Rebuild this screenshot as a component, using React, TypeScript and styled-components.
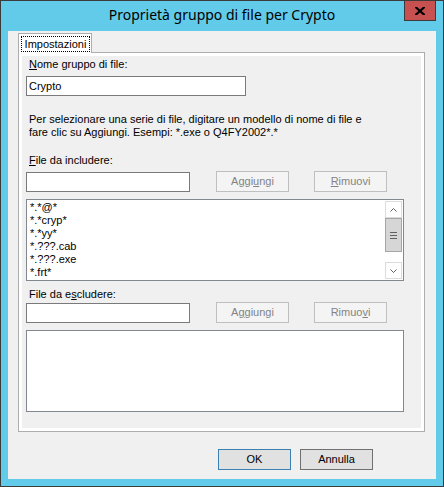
import React from "react";
import styled, { createGlobalStyle } from "styled-components";

const GlobalStyle = createGlobalStyle`
  html, body { margin: 0; padding: 0; background: #ffffff; }
  body { font-family: "Liberation Sans", Arial, sans-serif; }
  * { box-sizing: border-box; }
`;

const Window = styled.div`
  position: relative;
  width: 444px;
  height: 487px;
  border: 1px solid #3b3b3b;
  background: #63cbea;
  padding: 0 7px 7px 7px;
  display: flex;
  flex-direction: column;
`;

const TitleBar = styled.div`
  height: 30px;
  display: flex;
  justify-content: center;
`;

const Title = styled.div`
  font-family: "Noto Sans", "Open Sans", sans-serif;
  font-size: 14px;
  line-height: 20px;
  padding-top: 4px;
  color: #000000;
`;

const CloseButton = styled.div`
  position: absolute;
  top: -1px;
  right: 7px;
  width: 32px;
  height: 21px;
  background: #c75050;
  border: 1px solid #3b3b3b;
  display: flex;
  align-items: center;
  justify-content: center;
`;

const Client = styled.div`
  flex: 1;
  background: #f0f0f0;
  padding: 2px 11px 0 10px;
  display: flex;
  flex-direction: column;
`;

const TabStrip = styled.div`
  display: flex;
  height: 19px;
`;

const Tab = styled.div`
  position: relative;
  z-index: 1;
  width: 74px;
  height: 20px;
  border: 1px solid #adadad;
  border-bottom: none;
  background: #ffffff;
  padding: 2px 1px 0 2px;
`;

const FocusRect = styled.div`
  height: 16px;
  border: 1px dotted #000000;
  font-size: 11px;
  line-height: 14px;
  text-align: center;
  color: #000000;
`;

const Pane = styled.div`
  height: 380px;
  border: 1px solid #adadad;
  background: #ffffff;
  padding: 3px;
  display: flex;
`;

const Page = styled.div`
  flex: 1;
  background: #f0f0f0;
  padding: 2px 0 0 4px;
  display: flex;
  flex-direction: column;
`;

const Label = styled.div<{ $top: number }>`
  margin-top: ${(p) => p.$top}px;
  padding-left: 3px;
  font-size: 11px;
  line-height: 13px;
  color: #000000;
  white-space: nowrap;
`;

const Description = styled(Label)``;

const TextField = styled.div<{ $top?: number; $width: number }>`
  margin-top: ${(p) => p.$top ?? 0}px;
  width: ${(p) => p.$width}px;
  height: 20px;
  border: 1px solid #7a7a7a;
  background: #ffffff;
  padding-left: 2px;
  font-size: 11px;
  line-height: 18px;
  color: #000000;
`;

const FieldRow = styled.div<{ $top: number }>`
  margin-top: ${(p) => p.$top}px;
  height: 21px;
  display: flex;
  align-items: flex-end;
`;

const ButtonGroup = styled.div`
  display: flex;
  gap: 25px;
  margin-left: 26px;
  align-self: flex-start;
`;

const PushButton = styled.div`
  width: 73px;
  height: 21px;
  border: 1px solid #bfbfbf;
  background: #f4f4f4;
  color: #838383;
  font-size: 11px;
  line-height: 19px;
  text-align: center;
`;

const ListBox = styled.div<{ $top: number }>`
  margin-top: ${(p) => p.$top}px;
  width: 378px;
  height: 82px;
  border: 1px solid #828790;
  background: #ffffff;
  padding: 1px;
  display: flex;
`;

const ListItems = styled.div`
  flex: 1;
  overflow: hidden;
`;

const ListItem = styled.div`
  padding-left: 2px;
  font-size: 11px;
  line-height: 13px;
  white-space: nowrap;
  color: #000000;
`;

const ScrollBar = styled.div`
  width: 17px;
  display: flex;
  flex-direction: column;
`;

const ScrollArrow = styled.div`
  height: 17px;
  border: 1px solid #dcdcdc;
  background: #ffffff;
  display: flex;
  align-items: center;
  justify-content: center;
`;

const ScrollThumb = styled.div`
  height: 34px;
  border: 1px solid #a6a6a6;
  background: #d6d6d6;
  display: flex;
  flex-direction: column;
  align-items: center;
  justify-content: center;
  gap: 2px;
`;

const GripLine = styled.div`
  width: 7px;
  height: 1px;
  background: #606060;
`;

const ScrollTrack = styled.div`
  flex: 1;
  background: #ffffff;
`;

const Footer = styled.div`
  margin-top: 17px;
  display: flex;
  justify-content: flex-end;
  gap: 9px;
  padding-right: 52px;
`;

const DialogButton = styled.div<{ $default?: boolean }>`
  width: 73px;
  height: 21px;
  border: 1px solid ${(p) => (p.$default ? "#3c7fb1" : "#707070")};
  background: #e1e1e1;
  color: #000000;
  font-size: 11px;
  line-height: 19px;
  text-align: center;
`;

const Chevron = ({ up }: { up?: boolean }) => (
  <svg width="7" height="4" viewBox="0 0 7 4">
    <polyline
      points={up ? "0.5,3.5 3.5,0.5 6.5,3.5" : "0.5,0.5 3.5,3.5 6.5,0.5"}
      fill="none"
      stroke="#606060"
      strokeWidth="1"
    />
  </svg>
);

const CloseGlyph = () => (
  <svg width="10" height="8" viewBox="0 0 10 8">
    <path d="M1 0.5 L9 7.5 M9 0.5 L1 7.5" stroke="#000" strokeWidth="2.2" strokeLinecap="square" />
  </svg>
);

const includeItems = ["*.*@*", "*.*cryp*", "*.*yy*", "*.???.cab", "*.???.exe", "*.frt*"];

export default function App() {
  return (
    <>
      <GlobalStyle />
      <Window>
        <TitleBar>
          <Title>Proprietà gruppo di file per Crypto</Title>
        </TitleBar>
        <CloseButton>
          <CloseGlyph />
        </CloseButton>
        <Client>
          <TabStrip>
            <Tab>
              <FocusRect>Impostazioni</FocusRect>
            </Tab>
          </TabStrip>
          <Pane>
            <Page>
              <Label $top={0}>
                <u>N</u>ome gruppo di file:
              </Label>
              <TextField $top={5} $width={220}>Crypto</TextField>
              <Description $top={17}>
                Per selezionare una serie di file, digitare un modello di nome di file e
                <br />
                fare clic su Aggiungi. Esempi: *.exe o Q4FY2002*.*
              </Description>
              <Label $top={15}>
                <u>F</u>ile da includere:
              </Label>
              <FieldRow $top={4}>
                <TextField $width={164} />
                <ButtonGroup>
                  <PushButton>
                    Aggi<u>u</u>ngi
                  </PushButton>
                  <PushButton>
                    <u>R</u>imuovi
                  </PushButton>
                </ButtonGroup>
              </FieldRow>
              <ListBox $top={7}>
                <ListItems>
                  {includeItems.map((item) => (
                    <ListItem key={item}>{item}</ListItem>
                  ))}
                </ListItems>
                <ScrollBar>
                  <ScrollArrow>
                    <Chevron up />
                  </ScrollArrow>
                  <ScrollThumb>
                    <GripLine />
                    <GripLine />
                    <GripLine />
                  </ScrollThumb>
                  <ScrollTrack />
                  <ScrollArrow>
                    <Chevron />
                  </ScrollArrow>
                </ScrollBar>
              </ListBox>
              <Label $top={7}>
                File da e<u>s</u>cludere:
              </Label>
              <FieldRow $top={1}>
                <TextField $width={164} />
                <ButtonGroup>
                  <PushButton>
                    A<u>g</u>giungi
                  </PushButton>
                  <PushButton>
                    Rimuo<u>v</u>i
                  </PushButton>
                </ButtonGroup>
              </FieldRow>
              <ListBox $top={7}>
                <ListItems />
              </ListBox>
            </Page>
          </Pane>
          <Footer>
            <DialogButton $default>OK</DialogButton>
            <DialogButton>Annulla</DialogButton>
          </Footer>
        </Client>
      </Window>
    </>
  );
}
